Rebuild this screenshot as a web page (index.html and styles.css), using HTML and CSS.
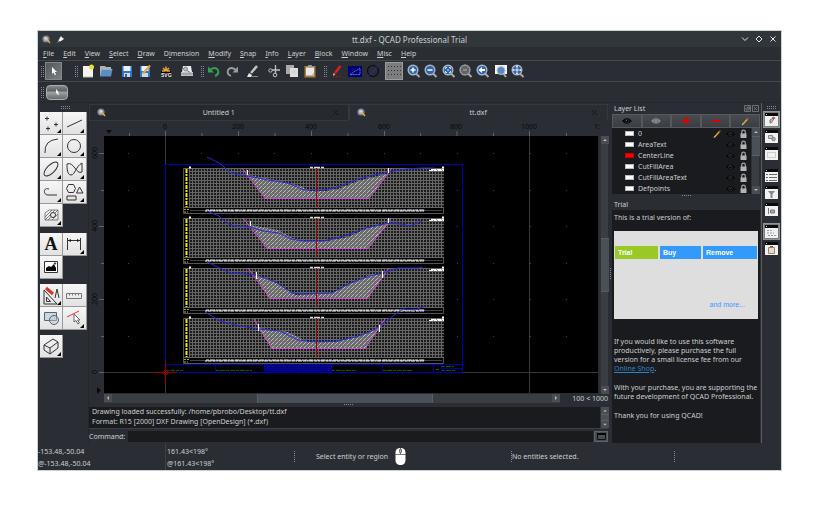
FILE: index.html
```html
<!DOCTYPE html>
<html lang="en">
<head>
<meta charset="utf-8">
<title>tt.dxf - QCAD Professional Trial</title>
<link rel="stylesheet" href="styles.css">
</head>
<body>
<svg class="defs" aria-hidden="true">
  <symbol id="qcad" viewBox="0 0 9 9"><circle cx="4" cy="4" r="3.6" fill="#7c8597"/><circle cx="3.8" cy="3.8" r="2.1" fill="#b9c0cf"/><path d="M4 3.4 8 8" stroke="#e9a93c" stroke-width="1.5"/><path d="M3.6 2.6 5 4.2" stroke="#fff"/></symbol>
  <symbol id="lens" viewBox="0 0 14 14"><path d="m9 9.500 3.500 3.500" stroke="#a9a9a6" stroke-width="2"/><circle cx="6" cy="6" r="4.800" fill="#2f66ad" stroke="#aab6c4" stroke-width="1.400"/></symbol>
  <symbol id="eye" viewBox="0 0 10 8"><path d="M0 4Q5-2 10 4 5 10 0 4Z" fill="currentColor"/><circle cx="5" cy="4" r="2" fill="none" stroke="#555b62" stroke-width=".5"/><circle cx="4.500" cy="3.400" r=".5" fill="#8a8f94"/></symbol>
  <symbol id="lock" viewBox="0 0 8 10"><path d="M2.200 5V3a1.800 1.800 0 0 1 3.600 0v2" fill="none" stroke="#a4a4a4" stroke-width="1.200"/><rect x="1" y="4.500" width="6" height="4.500" fill="#b4b4b4"/></symbol>
  <symbol id="pencil" viewBox="0 0 10 10"><path d="m1.500 8.500 5.500-6" stroke="#e9a842" stroke-width="1.600"/><path d="m7 2.500 1.200-1.300" stroke="#e33" stroke-width="1.600"/><path d="m1 9 1-1" stroke="#ddd"/></symbol>
  <symbol id="corner" viewBox="0 0 23 23"><path d="M21 17v4h-4z" fill="#000"/></symbol>
  <symbol id="pane" viewBox="0 0 13 13"><rect y="1" width="13" height="12" fill="#f1f1f1"/><rect width="13" height="3" fill="#0a0a0a"/><path d="M1 1.500h1" stroke="#ccc"/></symbol>
  <symbol id="up" viewBox="0 0 8 8"><path d="m2 5 2-2 2 2z" fill="#b9bcc0"/></symbol>
  <symbol id="down" viewBox="0 0 8 8"><path d="m2 3 2 2 2-2z" fill="#b9bcc0"/></symbol>
</svg>

<div class="window">
  <header class="titlebar">
    <div class="title-left">
      <svg width="9" height="9"><use href="#qcad"/></svg>
      <svg width="7" height="7" viewBox="0 0 8 8"><path d="M4.500.5 7.500 3.500 5 5 3 6 2 5l1-2zM3 5 .5 7.500" fill="#fff" stroke="#fff" stroke-width=".6"/></svg>
    </div>
    <h1>tt.dxf - QCAD Professional Trial</h1>
    <div class="title-right">
      <button aria-label="Minimize"><svg width="8" height="8" viewBox="0 0 8 8"><path d="m1 2.500 3 3 3-3"/></svg></button>
      <button aria-label="Maximize"><svg width="8" height="8" viewBox="0 0 8 8"><path d="M4 1 7 4 4 7 1 4z"/></svg></button>
      <button aria-label="Close"><svg width="8" height="8" viewBox="0 0 8 8"><path d="m1.500 1.500 5 5m0-5-5 5"/></svg></button>
    </div>
  </header>

  <nav class="menu">
    <button><u>F</u>ile</button><button><u>E</u>dit</button><button><u>V</u>iew</button><button><u>S</u>elect</button><button><u>D</u>raw</button><button>D<u>i</u>mension</button><button><u>M</u>odify</button><button><u>S</u>nap</button><button><u>I</u>nfo</button><button><u>L</u>ayer</button><button><u>B</u>lock</button><button><u>W</u>indow</button><button><u>M</u>isc</button><button><u>H</u>elp</button>
  </nav>

  <div class="toolbar">
    <i class="grip"></i>
    <button class="tool on" aria-label="Select"><svg viewBox="0 0 14 14"><path d="M5 3v7l1.600-1.500 1.200 2.700 1.200-.6-1.200-2.500H10z" fill="#fff"/></svg></button>
    <i class="grip spaced"></i>
    <button class="tool" aria-label="New"><svg viewBox="0 0 14 14"><path d="M2 2h10v11H2z" fill="#f3f3f0"/><path d="M2 13h10" stroke="#bbb"/><circle cx="10.500" cy="3" r="2.500" fill="#e8dc3c"/></svg></button>
    <button class="tool" aria-label="Open"><svg viewBox="0 0 14 14"><path d="M1 2h5l1 1h5v9H1z" fill="#b3b3ac"/><path d="M3 5h10.500L12 12.500H1z" fill="#5b8fc4"/><path d="M3.500 5.500H13" stroke="#8ab4dc"/></svg></button>
    <i class="sep"></i>
    <button class="tool" aria-label="Save"><svg viewBox="0 0 14 14"><path d="M2 2h10v11H2z" fill="#2f74cf"/><path d="M3.500 2h7v5h-7z" fill="#edf3fb"/><path d="M4 9h6v4H4z" fill="#cfd9e6"/><path d="M5 10h2v3H5z" fill="#2f5fa5"/></svg></button>
    <button class="tool" aria-label="Save as"><svg viewBox="0 0 14 14"><path d="M2 2h10v11H2z" fill="#2f74cf"/><path d="M3.500 2h7v5h-7z" fill="#edf3fb"/><path d="M4 9h6v4H4z" fill="#cfd9e6"/><path d="m5 9.500 7-8" stroke="#eca43a" stroke-width="2"/></svg></button>
    <i class="sep"></i>
    <button class="tool" aria-label="SVG export"><svg viewBox="0 0 14 14"><path d="M2 7h10v6H2z" fill="#080808"/><path d="M7 7V2.500M7 7 4 4M7 7l3-3M6 7H3M8 7h3" stroke="#efa52e" stroke-width="1.500"/><text x="2" y="12.500" class="svg-word">SVG</text></svg></button>
    <i class="sep"></i>
    <button class="tool" aria-label="Print preview"><svg viewBox="0 0 14 14"><path d="M3 2h8l1 6H2z" fill="#e9ebee"/><path d="M1 8h12v4H1z" fill="#c3c5c8"/><path d="M1 10h12" stroke="#85888c"/><circle cx="5.500" cy="5" r="2" fill="#a6c1dd" stroke="#888"/><path d="m7 6.500 3 2" stroke="#777"/></svg></button>
    <i class="grip"></i>
    <button class="tool" aria-label="Undo"><svg viewBox="0 0 14 14"><path d="M3 6q5-4 8 0 1.500 4-3 6" fill="none" stroke="#31a24c" stroke-width="2"/><path d="M1 2.500v6h6z" fill="#31a24c"/></svg></button>
    <button class="tool" aria-label="Redo"><svg viewBox="0 0 14 14"><path d="M11 6Q6 2 3 6q-1.500 4 3 6" fill="none" stroke="#999ca0" stroke-width="1.800"/><path d="M13 2.500v6H7.500z" fill="#999ca0"/></svg></button>
    <i class="sep"></i>
    <button class="tool" aria-label="Clear"><svg viewBox="0 0 14 14"><path d="m5 9 6-7" stroke="#c5c5c5" stroke-width="2.500"/><path d="m3 9 3 2-1 2H1z" fill="#e8e8e8"/><path d="M5 12.500h7" stroke="#888"/></svg></button>
    <i class="sep"></i>
    <button class="tool" aria-label="Cut"><svg viewBox="0 0 14 14" fill="none" stroke="#bfc2c5"><path d="M8.500 1v8M13 6H5" stroke-width="1.300"/><circle cx="3.500" cy="6.500" r="1.700"/><circle cx="8" cy="11" r="1.800"/></svg></button>
    <button class="tool" aria-label="Copy"><svg viewBox="0 0 14 14"><path d="M1 1h8v9H1z" fill="#aaa"/><path d="M5 4h8v9H5z" fill="#dedede"/><path d="M6.500 7h5m-5 2h5" stroke="#ccc"/></svg></button>
    <button class="tool" aria-label="Paste"><svg viewBox="0 0 14 14"><path d="M1.500 2h11v11.500h-11z" fill="#aa7b3c"/><path d="M3 3.500h8v8H3z" fill="#e8e8e8"/><path d="M5 1h4v2.500H5z" fill="#999"/><path d="m8 11.500 3-3v3z" fill="#bbb"/></svg></button>
    <i class="grip"></i>
    <button class="tool" aria-label="Pen"><svg viewBox="0 0 14 14"><path d="m5 9 5.500-7" stroke="#dd2020" stroke-width="2.400"/><path d="m3 12 .5-3 2 1.300z" fill="#eac18c"/><path d="M3 12.500h8" stroke="#a11" stroke-dasharray="2 1"/></svg></button>
    <button class="tool" aria-label="Line draft"><svg viewBox="0 0 14 14"><path d="M0 2h14v11H0z" fill="#000078"/><path d="M2 10.500h10V4z" fill="none" stroke="#7f87d0" stroke-width=".8" stroke-dasharray="2 .7"/></svg></button>
    <button class="tool" aria-label="Circle draft"><svg viewBox="0 0 14 14" fill="none"><circle cx="7" cy="7" r="5.500" stroke="#0a0b0c" stroke-width="1.200"/><path d="M1 13 13 1" stroke="#2a2ab0"/></svg></button>
    <i class="sep"></i>
    <button class="tool on light" aria-label="Grid"><svg viewBox="0 0 14 14"><path d="M1 2.500h13M1 6.500h13M1 10.500h13" stroke="#333" stroke-dasharray="1 2"/></svg></button>
    <div class="zooms">
      <button class="tool" aria-label="Zoom in"><svg viewBox="0 0 14 14"><use href="#lens"/><path d="M3.500 6h5M6 3.500v5" stroke="#fff" stroke-width="1.500"/></svg></button>
      <button class="tool" aria-label="Zoom out"><svg viewBox="0 0 14 14"><use href="#lens"/><path d="M3.500 6h5" stroke="#fff" stroke-width="1.500"/></svg></button>
      <button class="tool" aria-label="Auto zoom"><svg viewBox="0 0 14 14"><use href="#lens"/><path d="M3.500 5V3.500H5M7 3.500h1.500V5M8.500 7v1.500H7M5 8.500H3.500V7M5 6h2" stroke="#fff" stroke-width=".8" fill="none"/></svg></button>
      <button class="tool" aria-label="Zoom selection"><svg viewBox="0 0 14 14"><use href="#lens"/><circle cx="6" cy="6" r="4.800" fill="#636567" stroke="#999"/><path d="M4 6h4" stroke="#888" stroke-width="2"/></svg></button>
      <button class="tool" aria-label="Previous view"><svg viewBox="0 0 14 14"><use href="#lens"/><path d="M2.500 6 6 3v2h3v2H6v2z" fill="#fff"/></svg></button>
      <button class="tool" aria-label="Window zoom"><svg viewBox="0 0 14 14"><path d="M1 1h12v9H1z" fill="#f4f4f4"/><path d="m9 9 3 4" stroke="#aaa" stroke-width="2"/><circle cx="7" cy="6.500" r="4" fill="#5588c4" stroke="#b7c2cf"/></svg></button>
      <button class="tool" aria-label="Pan"><svg viewBox="0 0 14 14"><use href="#lens"/><path d="M6 2v8M2 6h8" stroke="#fff" stroke-width=".8"/><path d="m6 1.500 1 1.500H5zm0 9L7 9H5zM1.500 6 3 5v2zm9 0L9 5v2z" fill="#fff"/></svg></button>
    </div>
  </div>

  <div class="toolbar options">
    <i class="grip"></i>
    <button class="pill" aria-label="Reset"><svg width="14" height="10" viewBox="0 0 14 10"><path d="M6 2v5l1-1 1 2 1-.5-1-2h1z" fill="#fff"/></svg></button>
  </div>

  <main>
    <aside class="palette">
      <i class="grip-h"></i>
      <div class="pgroup">
        <button aria-label="Point"><svg viewBox="0 0 23 23"><path d="M5 6.500h4M7 4.500v4M14 12.500h4M16 10.500v4M6 16.500h4M8 14.500v4"/><use href="#corner"/></svg></button>
        <button aria-label="Line"><svg viewBox="0 0 23 23"><path d="m4 15 15-7"/><use href="#corner"/></svg></button>
        <button aria-label="Arc"><svg viewBox="0 0 23 23"><path d="M5 18Q4 5 18 4"/><use href="#corner"/></svg></button>
        <button aria-label="Circle"><svg viewBox="0 0 23 23"><circle cx="11" cy="11" r="6.500"/><use href="#corner"/></svg></button>
        <button aria-label="Ellipse"><svg viewBox="0 0 23 23"><ellipse cx="11" cy="11" rx="9" ry="4" transform="rotate(-45 11 11)"/><use href="#corner"/></svg></button>
        <button aria-label="Spline"><svg viewBox="0 0 23 23"><path d="M4 6c7-3 9 11 15 8V5C13 8 12 17 8 17S4 10 4 6"/><use href="#corner"/></svg></button>
        <button aria-label="Polyline"><svg viewBox="0 0 23 23"><path d="M9 8C3 6 3 14 8 14h9"/><use href="#corner"/></svg></button>
        <button aria-label="Shape"><svg viewBox="0 0 23 23"><path d="M5.500 3.500h5l2 4-2 4h-5l-2-4zM13.500 12l3-6 3.500 6zM4 15h9v4H4z"/><use href="#corner"/></svg></button>
        <button aria-label="Hatch"><svg viewBox="0 0 23 23"><path d="M5 9 9 6h9v10H5zM5 13l7-7M5 16 15 6M8 16 18 6M12 16l6-6" stroke="#666" stroke-width=".8"/><circle cx="13" cy="11" r="2.500" fill="#eee"/><use href="#corner"/></svg></button>
      </div>
      <div class="pgroup">
        <button class="letter" aria-label="Text">A</button>
        <button aria-label="Dimension"><svg viewBox="0 0 23 23"><path d="M4.500 17V5M17.500 17V5M5 7.500h12"/><path d="m5 7.500 3-1.500v3zM17 7.500 14 6v3z" fill="#222" stroke="none"/><use href="#corner"/></svg></button>
        <button aria-label="Bitmap"><svg viewBox="0 0 23 23"><path d="M4.500 5.500h13v11h-13z" fill="#fff"/><path d="M6 15v-3l3-2 2 1 3-3 2 4v3z" fill="#000" stroke="none"/><circle cx="15" cy="7.500" r=".7" fill="#000"/></svg></button>
      </div>
      <div class="pgroup">
        <button aria-label="Modify"><svg viewBox="0 0 23 23"><path d="M4 6v14h13zM6.500 13v4.500h4zM15 14l2-9 2 9"/><path d="m6 4 7 6" stroke="#d32" stroke-width="3"/><use href="#corner"/></svg></button>
        <button aria-label="Measure"><svg viewBox="0 0 23 23"><path d="M3.500 9.500h15v5h-15zM6.500 9.500v2m3-2v2m3-2v2m3-2v2" stroke="#777"/></svg></button>
        <button aria-label="Block"><svg viewBox="0 0 23 23"><path d="M4.500 5.500h12v8h-12z" fill="#ccd7df" stroke="#56656f"/><circle cx="14" cy="13" r="4.500" fill="#bccbd577" stroke="#56656f"/></svg></button>
        <button aria-label="Selection"><svg viewBox="0 0 23 23"><path d="m4 10 12-6" stroke="#e33"/><path d="M11 7v8l2-1.500 2 3.500 1.500-1-2-3H17z" fill="#fff" stroke="#666"/><use href="#corner"/></svg></button>
      </div>
      <div class="pgroup">
        <button aria-label="Isometric"><svg viewBox="0 0 23 23"><path d="m4 10 9-6 5 3v6l-8 6-6-4zM4 10l6 3 8-6M10 13v6"/><use href="#corner"/></svg></button>
      </div>
    </aside>

    <section class="center">
      <div class="tabs" role="tablist">
        <button role="tab" aria-selected="false"><svg width="9" height="9"><use href="#qcad"/></svg><span>Untitled 1</span><svg width="7" height="7" viewBox="0 0 7 7"><path d="m1 1 5 5m0-5-5 5" stroke="#15171a"/></svg></button>
        <button role="tab" aria-selected="true"><svg width="9" height="9"><use href="#qcad"/></svg><span>tt.dxf</span><svg width="7" height="7" viewBox="0 0 7 7"><path d="m1 1 5 5m0-5-5 5" stroke="#15171a"/></svg></button>
      </div>
      <div class="view">
        <svg class="drawing" viewBox="89 121 511 273" preserveAspectRatio="xMinYMin slice">
          <defs>
            <pattern id="mesh" width="3" height="3" patternUnits="userSpaceOnUse"><path d="M0 0h3v3H0z" fill="#1c1c1c"/><path d="M0 .5h3M.5 0v3" stroke="#666"/></pattern>
            <pattern id="hatch" width="4" height="4" patternUnits="userSpaceOnUse"><path d="M0 0h4v4H0z" fill="#6c6c6c"/><path d="m0 4 4-4M-1 1l2-2M3 5l2-2" stroke="#bbb"/><path d="M0 1.500h4" stroke="#666" stroke-width=".5"/></pattern>
            <pattern id="dots" x="165" y="153" width="73" height="73" patternUnits="userSpaceOnUse"><path d="M0 0h1v1H0zM36 0h1v1h-1zM0 37h1v1H0zM36 37h1v1h-1z" fill="#444"/></pattern>
            <g id="sheet">
              <path d="M183.500.5h260v45h-260z" fill="#000" stroke="#555"/>
              <path d="M189 0h255v39H189z" fill="url(#mesh)"/>
              <path d="M184 .5h260M184 39.500h260" stroke="#666"/>
              <path d="M186.500 1v38" stroke="#f2ee00" stroke-width="2" stroke-dasharray="4 1 2 1"/>
              <path d="M184 41.500h5M184 44h4" stroke="#b5b000" stroke-dasharray="2 1"/>
              <path d="M190 42.500h252" stroke="#444"/>
              <path d="M206 42h219" stroke="#fff" stroke-dasharray="3 1 5 .7 2 .6"/>
              <path d="M205 43h219" stroke="#fff" stroke-dasharray="2 .6 4 1 3 .7"/>
              <path d="M310 -.5h14" stroke="#ddd" stroke-width="1.500" stroke-dasharray="3 1 6 1"/>
              <path d="M189-.5h2M442-.5h2" stroke="#fff" stroke-width="2"/>
              <path d="M431 1.500h13" stroke="#fff" stroke-dasharray="5 .5"/>
              <path d="M429 2.500h15" stroke="#fff" stroke-dasharray="4 .5"/>
            </g>
          </defs>
          <path d="M104 136h494v257H104z"/>
          <path d="M104 136h494v257H104z" fill="url(#dots)"/>
          <g class="ruler">
            <path d="M129.500 133v3M165.500 131v5M202 133v3M238.500 131v5M275 133v3M311.500 131v5M348 133v3M384.500 131v5M420.500 133v3M457 131v5M493.500 133v3M529.500 131v5M566.500 133v3M99 153.500h5M101 190.500h3M99 226.500h5M101 263.500h3M99 299.500h5M101 336.500h3M99 372.500h5"/>
            <g text-anchor="middle"><text x="165" y="129">0</text><text x="238" y="129">200</text><text x="311" y="129">400</text><text x="384" y="129">600</text><text x="456" y="129">800</text><text x="529" y="129">1000</text>
            <text transform="translate(97 153) rotate(-90)">600</text><text transform="translate(97 226) rotate(-90)">400</text><text transform="translate(97 299) rotate(-90)">200</text><text transform="translate(97 372) rotate(-90)">0</text></g>
            <text x="594" y="129">1:</text>
            <path d="M106 130h6l-3 3.500zM97 387l4 3.500-4 3.500z" class="mark"/>
          </g>
          <path d="M165.500 136v257M529.500 136v257M104 372.500h494" stroke="#383838"/>
          <path d="M165.500 164.500h297v208h-297z" fill="none" stroke="#0000b4"/>
          <path d="M165 364.500h297" stroke="#0000b4"/>
          <path d="M265 365h67v7h-67z" fill="#000058"/>
          <path d="M215.500 364v8M264.500 364v8M298.500 364v8M331.500 364v8M382.500 364v8M433.500 364v8M441.500 364v8M264 366.500h67M264 368.500h67M264 370.500h67M441 368.500h21" stroke="#0000c8" stroke-width=".8"/>
          <path d="M166 370.500h17M216 370.500h36M332 370.500h25M383 370.500h29M436 369.500h3M442 366.500h12M442 370.500h14" stroke="#006400" stroke-dasharray="3 1 5 1"/>
          <use href="#sheet" y="168"/><use href="#sheet" y="218"/><use href="#sheet" y="268"/><use href="#sheet" y="318"/>
          <g fill="url(#hatch)">
            <path d="M248 175 265 198h104l19-24-10 2-20 5-20 8-12 2h-16l-10-5-20-5z"/>
            <path d="m250 225 17 23h101l20-24-20 4-20 9-20 4h-24l-12-3-14-8z"/>
            <path d="m254 274 16 25h97l17-23-12-2-24 11-16 8-36 2-16-10-14-7z"/>
            <path d="m258 328 14 20h93l16-22-21 10-24 6h-28l-20-10z"/>
          </g>
          <g class="slope">
            <path d="m242 168 23 30.500h104l23-30.500M243 218l24 30.500h101l23-30.500M248 268l22 30.500h97l22-30.500M254 319l18 29.500h93l20-29.500"/>
          </g>
          <g class="terrain">
            <path d="m207 157 14 7 8 8 9 3 10 1 20 4 20 3 16 7h20l14-3 20-8 12-3 18-4 18-3 16-1h12"/>
            <path d="m207 211 12 5 7 7 9 3 15 1 13 4 16 2 12 6 12 2h21l20-5 22-8 22-5 13 1 9 2 12-5"/>
            <path d="m207 262 13 6 10 5 15 1 11 1 20 7 16 11 15 1 25-1 18-10 20-7 16-4 12-4 20 0 5-1"/>
            <path d="m205 312 15 9 20 5 18 3 22 2 18 9 20 2 18-1 20-4 18-7 12-9 17-12 12 1 10-4"/>
          </g>
          <path d="M316.500 168v39M316.500 218v39M316.500 268v39M316.500 318v39" stroke="#a00000"/>
          <path d="M247.500 170v5M388.500 168v5M250.500 221v5M388.500 218v5M256.500 272v7M382.500 271v7M258.500 324v7M379.500 325v7" stroke="#fff"/>
          <path d="M153 372.500h24M165.500 361v23" stroke="#960000"/><circle cx="165.500" cy="372.500" r="2.500" fill="none" stroke="#960000"/>
        </svg>
        <div class="vscroll tall"><svg><use href="#up"/></svg><i></i><svg><use href="#down"/></svg></div>
      </div>
      <div class="bottom">
        <div class="hscroll"><svg width="8" height="8" viewBox="0 0 8 8"><path d="m5 2-2 2 2 2z" fill="#b9bcc0"/></svg><div class="track"><i></i></div><svg width="8" height="8" viewBox="0 0 8 8"><path d="m3 2 2 2-2 2z" fill="#b9bcc0"/></svg></div>
        <span>100 &lt; 1000</span>
      </div>
      <div class="split"><i class="grip-h"></i></div>
      <div class="log"><p>Drawing loaded successfully: /home/pbrobo/Desktop/tt.dxf<br>Format: R15 [2000] DXF Drawing [OpenDesign] (*.dxf)</p><div class="vscroll"><svg><use href="#up"/></svg><i></i><svg><use href="#down"/></svg></div></div>
      <div class="command"><label for="cmd">Command:</label><input id="cmd" type="text"><button aria-label="Toggle shell"><svg width="9" height="7" viewBox="0 0 9 7"><path d="M.5.5h8v6h-8z" fill="#4a4e53" stroke="#111"/><path d="M0 1h9" stroke="#000" stroke-width="2"/></svg></button></div>
    </section>

    <div class="vsplit"><i class="grip"></i></div>

    <aside class="dock">
      <header><h2>Layer List</h2><svg width="15" height="7" viewBox="0 0 15 7" fill="none" stroke="#7d8185" stroke-width=".8"><path d="M.5.5h6v6h-6zM2 3h3v2H2zM3 2h2.500v2M8.500.5h6v6h-6zM10 2l3 3m0-3-3 3"/></svg></header>
      <div class="layer-tools">
        <button aria-label="Show all"><svg width="10" height="8" color="#000"><use href="#eye"/></svg></button>
        <button aria-label="Hide all"><svg width="10" height="8" color="#85898d"><use href="#eye"/></svg></button>
        <button aria-label="Add layer"><svg width="8" height="8" viewBox="0 0 8 8"><path d="M3 0h2v3h3v2H5v3H3V5H0V3h3z" fill="#e00000"/></svg></button>
        <button aria-label="Remove layer"><svg width="8" height="8" viewBox="0 0 8 8"><path d="M0 3h8v2H0z" fill="#e00000"/></svg></button>
        <button aria-label="Edit layer"><svg width="9" height="9"><use href="#pencil"/></svg></button>
      </div>
      <div class="layers">
        <ul>
          <li><i></i><span>0</span><svg class="p"><use href="#pencil"/></svg><svg><use href="#eye"/></svg><svg><use href="#lock"/></svg></li>
          <li><i></i><span>AreaText</span><svg><use href="#eye"/></svg><svg><use href="#lock"/></svg></li>
          <li><i class="red"></i><span>CenterLine</span><svg><use href="#eye"/></svg><svg><use href="#lock"/></svg></li>
          <li><i></i><span>CutFillArea</span><svg><use href="#eye"/></svg><svg><use href="#lock"/></svg></li>
          <li><i></i><span>CutFillAreaText</span><svg><use href="#eye"/></svg><svg><use href="#lock"/></svg></li>
          <li><i></i><span>Defpoints</span><svg><use href="#eye"/></svg><svg><use href="#lock"/></svg></li>
        </ul>
        <div class="vscroll top"><svg><use href="#up"/></svg><i></i><svg><use href="#down"/></svg></div>
      </div>
      <div class="split"><i class="grip-h"></i></div>
      <h2 class="trial-title">Trial</h2>
      <div class="trial">
        <p>This is a trial version of:</p>
        <div class="banner">
          <div class="choices"><button class="green">Trial</button><button>Buy</button><button>Remove</button></div>
          <span>and more...</span>
        </div>
        <p>If you would like to use this software productively, please purchase the full version for a small license fee from our <a href="#">Online Shop</a>.</p>
        <p>With your purchase, you are supporting the future development of QCAD Professional.</p>
        <p>Thank you for using QCAD!</p>
      </div>
    </aside>

    <aside class="panels">
      <i class="grip-h"></i>
      <button class="on" aria-label="Property editor"><svg viewBox="0 0 13 13"><use href="#pane"/><path d="M5 10V7l3-2 1 1-3 4z" fill="#bbb" stroke="#777"/><path d="m7 5 2-1 1 2" stroke="#d33" fill="none"/></svg></button>
      <button aria-label="Block list"><svg viewBox="0 0 13 13"><use href="#pane"/><path d="M3.500 5.500h4v3h-4z" fill="#ccc" stroke="#888"/><circle cx="8.500" cy="9" r="1.800" fill="#9db59d" stroke="#777" stroke-width=".8"/></svg></button>
      <button aria-label="View list"><svg viewBox="0 0 13 13"><use href="#pane"/><path d="M2.500 5.500h8v5h-8z" fill="none" stroke="#aaa" stroke-dasharray="1 1"/></svg></button>
      <button class="gap" aria-label="Layer list"><svg viewBox="0 0 13 13"><use href="#pane"/><path d="M1 5.500h2m1 0h8M1 8.500h2m1 0h8M1 11.500h2m1 0h8" stroke="#666"/></svg></button>
      <button aria-label="Filter"><svg viewBox="0 0 13 13"><use href="#pane"/><path d="M3 5h7L7.500 8v4h-2V8z" fill="#888"/></svg></button>
      <button aria-label="Library"><svg viewBox="0 0 13 13"><use href="#pane"/><path d="M3.500 5v6m2-4h4v3h-4z" stroke="#777" fill="#aaa"/></svg></button>
      <button class="on gap" aria-label="Command line"><svg viewBox="0 0 13 13"><use href="#pane"/><path d="M2 5.500h5M2 8h7M3 10.500h8" stroke="#999" stroke-dasharray="2 1"/></svg></button>
      <button aria-label="Clipboard"><svg viewBox="0 0 13 13"><use href="#pane"/><path d="M3.500 5.500h6v6h-6z" fill="#ddd" stroke="#a58552"/><path d="M5 4.500h3" stroke="#555"/></svg></button>
    </aside>
  </main>

  <footer>
    <div class="coords">-153.48,-50.04<br>@-153.48,-50.04</div>
    <div class="coords polar">161.43&lt;198°<br>@161.43&lt;198°</div>
    <div class="hint"><i class="grip"></i><span>Select entity or region</span><svg width="11" height="19" viewBox="0 0 11 19"><rect x=".5" y="1" width="10" height="17" rx="4.500" fill="#fff"/><path d="M0 7.500h11M5.500 1v6" stroke="#555" stroke-width=".8"/><rect x="4.500" y="2" width="2" height="4" rx="1" fill="#bbb" stroke="#333" stroke-width=".6"/></svg></div>
    <div class="picked"><i class="grip"></i><span>No entities selected.</span></div>
    <div class="picked"><i class="grip"></i></div>
  </footer>
</div>
</body>
</html>
```
FILE: styles.css
```css
* { box-sizing: border-box; }

body {
  margin: 0;
  padding: 31px 38px 45px;
  min-height: 100vh;
  display: grid;
  background: #fff;
  color: #cdcfd1;
  font: 7px/9px "Noto Sans", sans-serif;
}

button, input { font: inherit; color: inherit; border: 0; padding: 0; margin: 0; background: none; }
button { display: flex; align-items: center; justify-content: center; }
h1, h2, p, ul { margin: 0; padding: 0; font: inherit; list-style: none; }
svg { display: block; flex: none; }
.defs { position: absolute; width: 0; height: 0; }

.window {
  display: grid;
  grid-template-rows: 16px 13px 21px 22px 1fr 27px;
  background: #2a2e34;
  outline: 1px solid #c9d1d3;
  min-width: 0;
}

.titlebar {
  display: grid;
  grid-template-columns: 1fr auto 1fr;
  align-items: center;
  background: #31363a;
  padding: 0 4px;
}
.titlebar h1 { font-size: 8px; }
.title-left, .title-right { display: flex; gap: 6px; align-items: center; }
.title-right { justify-content: flex-end; }
.title-right path { fill: none; stroke: #e4e6e7; }

.menu { display: flex; gap: 9px; padding: 0 5px; align-items: center; background: #2a2e32; }
.menu u { text-underline-offset: 1px; }

.toolbar { display: flex; align-items: center; border-top: 1px solid #44484b; padding-left: 2px; }
.toolbar.options { border-bottom: 1px solid #24272b; }
.grip, .grip-h { flex: none; background: conic-gradient(#85898d 25%, transparent 0) 0 0 / 2px 2px; }
.grip { width: 4px; height: 11px; }
.grip-h { width: 11px; height: 4px; }
.grip.spaced { margin: 0 1px 0 12px; }
.tool { width: 18px; height: 18px; flex: none; }
.tool svg { width: 14px; height: 14px; }
.tool.on { border: 1px solid #85888a; background: linear-gradient(135deg, #53575b, #7c7f81); margin-left: 1px; width: 17px; }
.tool.on.light { background: #7b7d7f; border-color: #9a9c9e; width: 18px; margin: 0 2px 0 0; }
.sep { width: 3px; flex: none; }
.toolbar .grip ~ .grip:not(.spaced) { margin: 0 1px 0 4px; }
.zooms { width: 122px; display: grid; grid-template-columns: repeat(7, 1fr); }
.zooms .tool { width: auto; }
.svg-word { font: bold 5px "Liberation Sans", sans-serif; fill: #fff; }
.pill { width: 22px; height: 15px; margin-left: 2px; border: 1px solid #aaadae; border-radius: 4px; background: linear-gradient(#85888a, #606366 35%, #9b9d9e 50%, #6a6d6f); }

main { display: grid; grid-template-columns: 51px minmax(0, 1fr) 4px 148px 21px; min-height: 0; }

.palette { display: flex; flex-direction: column; gap: 5px; padding: 3px 2px; }
.palette .grip-h { margin-left: 20px; margin-bottom: -3px; }
.pgroup { display: grid; grid-template-columns: 23px 24px; grid-auto-rows: 23px; }
.pgroup:nth-of-type(1) { margin-bottom: 1px; }
.pgroup button { background: linear-gradient(#f6f6f6, #e2e2e2); border: 1px solid #999; border-width: 0 1px 1px 0; color: #111; }
.pgroup svg { width: 23px; height: 23px; fill: none; stroke: #333; stroke-width: 1; }
.pgroup use { stroke: none; }
.pgroup .letter { font: bold 18px "Liberation Serif", serif; }

.center { display: grid; grid-template-rows: 18px minmax(0, 1fr) 8px 5px 21px 14px; min-width: 0; padding-bottom: 1px; border-left: 1px solid #24272b; margin-left: -1px; }
.tabs { display: grid; grid-template-columns: 1fr 1fr; padding-top: 1px; }
.tabs button { padding: 0 9px 0 7px; background: #262a2e; border: 1px solid #35393e; }
.tabs button[aria-selected="true"] { background: #2a2e34; border-bottom-color: transparent; }
.tabs span { flex: 1; text-align: center; }
.view { display: flex; min-height: 0; }
.drawing { flex: 1; min-width: 0; width: 0; height: 100%; font: 7px "Noto Sans", sans-serif; }
.ruler text, .ruler .mark { fill: #08090a; stroke: none; }
.ruler path { fill: none; stroke: #606469; }
.slope { fill: none; stroke: #d84cd8; stroke-width: 1; }
.terrain { fill: none; stroke: #2828dc; stroke-width: 1; }

.vscroll { width: 8px; flex: none; display: grid; grid-template-rows: 8px 1fr 8px; background: #3a3e43; border: 1px solid #2e3237; border-width: 0 0 0 1px; }
.vscroll svg, .hscroll > svg { width: 8px; height: 8px; background: #4a4e53; }
.vscroll i { background: #4b5056; border: 1px solid #5a5f64; border-width: 1px 0; }
.vscroll.tall { margin-top: 15px; }
.vscroll.tall i { height: 22%; align-self: center; }
.vscroll.top i { height: 20px; }
.bottom { display: grid; grid-template-columns: 1fr 48px; }
.bottom span { text-align: right; }
.hscroll { display: flex; margin-left: 15px; background: #3a3e43; }
.track { flex: 1; display: grid; grid-template-columns: 33% 40% 1fr; }
.track i { grid-column: 2; background: #4b5056; border: 1px solid #5a5f64; border-width: 0 1px; }
.split { display: flex; align-items: center; justify-content: center; }
.split .grip-h { height: 2px; }
.log { display: flex; background: #191b1e; }
.log p { flex: 1; padding: 0 3px; line-height: 10px; }
.log .vscroll { grid-template-rows: 7px 1fr 7px; }
.log .vscroll svg { height: 7px; }
.command { display: grid; grid-template-columns: 38px 1fr 14px; gap: 1px; padding-top: 2px; align-items: stretch; border-top: 1px solid #3b3f43; }
.command label { align-self: center; }
.command input { background: #191b1e; min-width: 0; height: 11px; }
.command button { background: #484c51; border: 1px solid #606468; height: 11px; }

.vsplit { display: flex; align-items: center; }
.vsplit .grip { width: 2px; margin-left: 1px; }

.dock { display: flex; flex-direction: column; min-width: 0; }
.dock > header { display: flex; justify-content: space-between; align-items: center; height: 11px; padding: 0 1px 0 2px; }
.layer-tools { display: grid; grid-template-columns: repeat(5, 1fr); height: 14px; }
.layer-tools button { background: linear-gradient(#484c51, #3a3e43); border: 1px solid #565a5f; }
.layers { display: flex; background: #191b1e; height: 66px; margin-right: 1px; }
.layers ul { flex: 1; }
.layers li { display: flex; align-items: center; height: 11px; padding: 0 3px 0 13px; gap: 4px; }
.layers li i { width: 9px; height: 5px; background: #fff; outline: 1px solid #bbb; outline-offset: -1px; }
.layers li .red { background: #f00; outline-color: #c00; }
.layers li span { flex: 1; }
.layers li svg { width: 9px; height: 10px; color: #050505; }
.dock .split { height: 4px; }
.trial-title { height: 12px; line-height: 13px; padding-left: 2px; }
.trial { flex: 1; background: #191b1e; padding: 3px 2px; }
.trial p { margin-bottom: 10px; }
.trial a { color: #2e83c4; }
.banner {
  display: flex;
  flex-direction: column;
  height: 88px;
  margin: -1px 0 18px;
  padding-top: 15px;
  background: #dedede;
  color: #369bff;
  font: 7px/9px "Liberation Sans", sans-serif;
}
.banner > span { align-self: flex-end; margin: 41px 13px 0 0; }
.choices { display: grid; grid-template-columns: 43fr 41fr 54fr; gap: 2px; padding: 0 1px; }
.choices button { height: 13px; justify-content: flex-start; padding-left: 3px; background: #3399fb; color: #fff; font-weight: bold; }
.choices .green { background: #98c926; }

.panels { display: flex; flex-direction: column; align-items: center; padding-top: 3px; border-left: 1px solid #5a5e62; margin-left: 1px; }
.panels .grip-h { margin-bottom: 1px; }
.panels button { width: 17px; height: 17px; }
.panels svg { width: 13px; height: 13px; }
.panels .on { background: #7b7e80; border: 1px solid #929597; }
.panels .gap { margin-top: 5px; }

footer { display: grid; grid-template-columns: 127fr 128fr 217fr 163fr 108fr; white-space: nowrap; }
.coords { line-height: 12px; padding-top: 3px; }
.polar { border-left: 1px solid #3d4145; padding-left: 1px; }
footer div:not(.coords) { display: flex; align-items: center; }
footer .grip { width: 2px; }
.hint span { margin: 0 7px 0 21px; }
```
